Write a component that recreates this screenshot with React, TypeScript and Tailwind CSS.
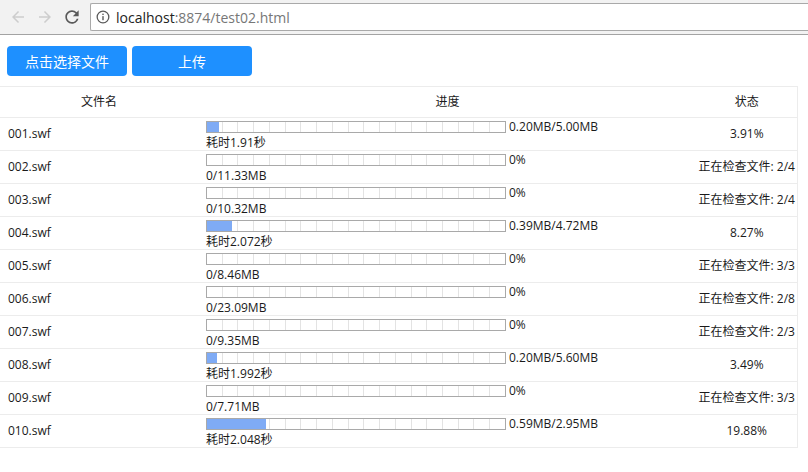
import React from "react";

type Row = {
  name: string;
  pct: number;
  right: string;
  sub: string;
  status: string;
};

const rows: Row[] = [
  { name: "001.swf", pct: 3.91, right: "0.20MB/5.00MB", sub: "耗时1.91秒", status: "3.91%" },
  { name: "002.swf", pct: 0, right: "0%", sub: "0/11.33MB", status: "正在检查文件: 2/4" },
  { name: "003.swf", pct: 0, right: "0%", sub: "0/10.32MB", status: "正在检查文件: 2/4" },
  { name: "004.swf", pct: 8.27, right: "0.39MB/4.72MB", sub: "耗时2.072秒", status: "8.27%" },
  { name: "005.swf", pct: 0, right: "0%", sub: "0/8.46MB", status: "正在检查文件: 3/3" },
  { name: "006.swf", pct: 0, right: "0%", sub: "0/23.09MB", status: "正在检查文件: 2/8" },
  { name: "007.swf", pct: 0, right: "0%", sub: "0/9.35MB", status: "正在检查文件: 2/3" },
  { name: "008.swf", pct: 3.49, right: "0.20MB/5.60MB", sub: "耗时1.992秒", status: "3.49%" },
  { name: "009.swf", pct: 0, right: "0%", sub: "0/7.71MB", status: "正在检查文件: 3/3" },
  { name: "010.swf", pct: 19.88, right: "0.59MB/2.95MB", sub: "耗时2.048秒", status: "19.88%" },
];

function ProgressBar({ pct }: { pct: number }) {
  return (
    <div className="relative flex h-[12px] w-[300px] shrink-0 border border-[#a9a9a9] bg-white">
      {Array.from({ length: 19 }).map((_, i) => (
        <div key={i} className={"flex-1 " + (i > 0 ? "border-l border-[#e3e3e3]" : "")} />
      ))}
      <div className="absolute left-0 top-0 h-full bg-[#7fabf5]" style={{ width: `${pct}%` }} />
    </div>
  );
}

function BrowserBar() {
  return (
    <div className="flex h-[35px] items-center border-b border-[#a3a3a3] bg-[#f2f2f2]">
      <div className="flex w-[90px] shrink-0 items-center pl-[8px]">
        <svg width="18" height="18" viewBox="0 0 24 24" className="ml-[1px]">
          <path d="M20 11H7.83l5.59-5.59L12 4l-8 8 8 8 1.41-1.41L7.83 13H20v-2z" fill="#cdcdcd" />
        </svg>
        <svg width="18" height="18" viewBox="0 0 24 24" className="ml-[9px]">
          <path d="M12 4l-1.41 1.41L16.17 11H4v2h12.17l-5.58 5.59L12 20l8-8z" fill="#cdcdcd" />
        </svg>
        <svg width="20" height="20" viewBox="0 0 24 24" className="ml-[8px]">
          <path
            d="M17.65 6.35A7.958 7.958 0 0 0 12 4c-4.42 0-7.99 3.58-7.99 8s3.57 8 7.99 8c3.73 0 6.84-2.55 7.73-6h-2.08A5.99 5.99 0 0 1 12 18c-3.31 0-6-2.69-6-6s2.69-6 6-6c1.66 0 3.14.69 4.22 1.78L13 11h7V4l-2.35 2.35z"
            fill="#5a5a5a"
          />
        </svg>
      </div>
      <div className="flex h-[28px] flex-1 items-center rounded-l-[2px] border border-r-0 border-[#a9a9a9] bg-white pl-[5px] font-['Open_Sans',sans-serif] text-[14px]">
        <svg width="14" height="14" viewBox="0 0 24 24">
          <circle cx="12" cy="12" r="10" fill="none" stroke="#5a5a5a" strokeWidth="2.2" />
          <rect x="10.8" y="10.5" width="2.4" height="7" fill="#5a5a5a" />
          <rect x="10.8" y="6.2" width="2.4" height="2.4" fill="#5a5a5a" />
        </svg>
        <span className="ml-[6px] text-[#222]">localhost</span>
        <span className="text-[#777]">:8874/test02.html</span>
      </div>
    </div>
  );
}

export default function App() {
  return (
    <div className="h-[472px] w-[808px] overflow-hidden bg-white font-['Open_Sans','Noto_Sans_CJK_SC',sans-serif] text-[12px] text-[#1a1a1a]">
      <BrowserBar />
      <div className="flex gap-[5px] pl-[7px] pt-[11px]">
        <button className="h-[30px] w-[120px] rounded-[4px] bg-[#1e90ff] text-[14px] text-white">点击选择文件</button>
        <button className="h-[30px] w-[120px] rounded-[4px] bg-[#1e90ff] text-[14px] text-white">上传</button>
      </div>
      <table className="mt-[10px] w-[797px] table-fixed border-collapse">
        <colgroup>
          <col className="w-[198px]" />
          <col className="w-[499px]" />
          <col className="w-[100px]" />
        </colgroup>
        <thead>
          <tr className="h-[31px] border-t border-b border-[#ececec]">
            <th className="p-0 font-normal">文件名</th>
            <th className="p-0 font-normal">进度</th>
            <th className="border-r border-[#ececec] p-0 font-normal">状态</th>
          </tr>
        </thead>
        <tbody>
          {rows.map((r) => (
            <tr key={r.name} className="h-[32px] border-b border-[#ececec]">
              <td className="py-0 pl-[8px] align-middle">{r.name}</td>
              <td className="pb-0 pl-[8px] pt-[1px] align-top">
                <div className="flex h-[16px] items-center">
                  <ProgressBar pct={r.pct} />
                  <span className="ml-[3px] whitespace-nowrap leading-[16px]">{r.right}</span>
                </div>
                <div className="leading-[15px]">{r.sub}</div>
              </td>
              <td className="whitespace-nowrap border-r border-[#ececec] p-0 text-center align-middle">{r.status}</td>
            </tr>
          ))}
        </tbody>
      </table>
    </div>
  );
}
